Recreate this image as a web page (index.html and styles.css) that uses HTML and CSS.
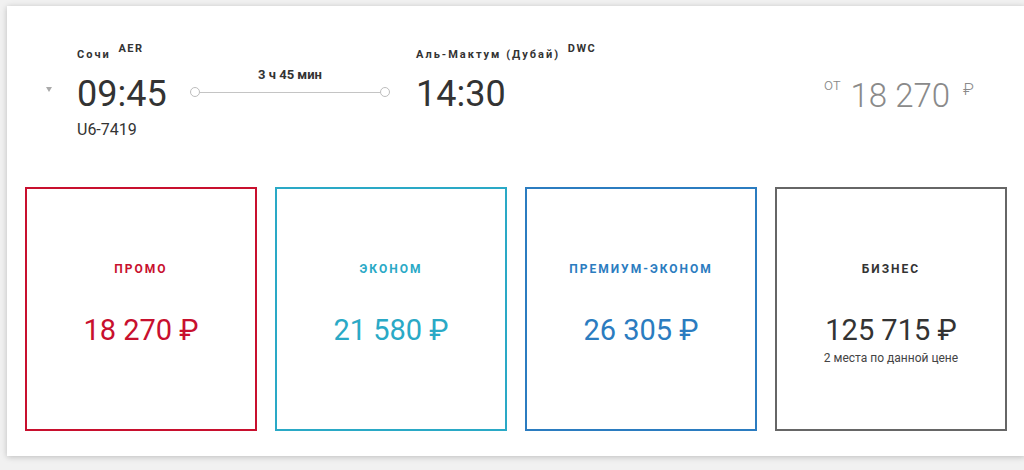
FILE: index.html
```html
<!DOCTYPE html>
<html lang="ru">
<head>
<meta charset="utf-8">
<title>Рейс</title>
<link rel="stylesheet" href="styles.css">
</head>
<body>
<div class="card">
  <div class="flight">
    <span class="caret"></span>
    <div class="point dep">
      <div class="city">Сочи <span class="code">AER</span></div>
      <div class="time">09:45</div>
      <div class="num">U6-7419</div>
    </div>
    <div class="duration">
      <div class="dur-text">3 ч 45 мин</div>
      <div class="track"><span class="dot"></span><span class="line"></span><span class="dot"></span></div>
    </div>
    <div class="point arr">
      <div class="city">Аль-Мактум (Дубай) <span class="code">DWC</span></div>
      <div class="time">14:30</div>
    </div>
    <div class="from">
      <span class="from-lbl">от</span><span class="from-val">18 270</span><span class="from-cur">₽</span>
    </div>
  </div>
  <div class="fares">
    <div class="fare promo">
      <div class="fare-name">Промо</div>
      <div class="fare-price">18 270 ₽</div>
    </div>
    <div class="fare econ">
      <div class="fare-name">Эконом</div>
      <div class="fare-price">21 580 ₽</div>
    </div>
    <div class="fare prem">
      <div class="fare-name">Премиум-эконом</div>
      <div class="fare-price">26 305 ₽</div>
    </div>
    <div class="fare biz">
      <div class="fare-name">Бизнес</div>
      <div class="fare-price">125 715 ₽</div>
      <div class="fare-note">2 места по данной цене</div>
    </div>
  </div>
</div>
</body>
</html>
```

FILE: styles.css
```css
html, body {
  margin: 0;
  padding: 0;
}
body {
  background: #f1f1f1;
  font-family: Roboto, "Liberation Sans", sans-serif;
  color: #333;
  width: 1024px;
  height: 470px;
  overflow: hidden;
}
.card {
  margin: 6px 0 0 7px;
  width: 1018px;
  box-sizing: border-box;
  background: #fff;
  box-shadow: 0 1px 6px rgba(0, 0, 0, 0.22);
  padding: 0 18px 25px 18px;
}
.flight {
  display: flex;
  align-items: flex-start;
  padding-top: 42px;
  height: 139px;
}
.caret {
  width: 0;
  height: 0;
  border-left: 3px solid transparent;
  border-right: 3px solid transparent;
  border-top: 5px solid #aaa;
  margin: 39px 25px 0 21px;
}
.dep {
  width: 113px;
  flex: none;
}
.arr {
  flex: 1;
  margin-left: 26px;
}
.city {
  font-size: 11px;
  line-height: 14px;
  font-weight: 700;
  letter-spacing: 2px;
  color: #333;
  white-space: nowrap;
}
.code {
  vertical-align: 6px;
  line-height: 0;
  letter-spacing: 1.5px;
  margin-left: 3px;
}
.time {
  font-size: 36px;
  line-height: 42px;
  margin-top: 11px;
  color: #333;
}
.num {
  font-size: 16px;
  line-height: 20px;
  margin-top: 5px;
  color: #333;
}
.duration {
  width: 200px;
  flex: none;
  margin-top: 19px;
}
.dur-text {
  font-size: 13px;
  line-height: 16px;
  font-weight: 700;
  text-align: center;
  color: #333;
}
.track {
  display: flex;
  align-items: center;
  margin-top: 4px;
  height: 10px;
}
.dot {
  width: 8px;
  height: 8px;
  border: 1px solid #bdbdbd;
  border-radius: 50%;
  background: #fff;
  flex: none;
}
.line {
  flex: 1;
  height: 1px;
  background: #c4c4c4;
}
.from {
  display: flex;
  align-items: flex-start;
  margin-top: 28px;
  margin-right: 33px;
  font-weight: 300;
  color: #8a8a8a;
  white-space: nowrap;
}
.from-lbl {
  font-size: 16px;
  line-height: 18px;
  margin-top: 0;
  margin-right: 10px;
}
.from-val {
  font-size: 33px;
  line-height: 40px;
}
.from-cur {
  font-size: 17px;
  line-height: 20px;
  margin-top: 3px;
  margin-left: 13px;
}
.fares {
  display: grid;
  grid-template-columns: repeat(4, 232px);
  column-gap: 18px;
}
.fare {
  height: 244px;
  box-sizing: border-box;
  border: 2px solid #666;
  padding-top: 72px;
  text-align: center;
}
.fare-name {
  font-size: 12px;
  line-height: 16px;
  font-weight: 700;
  letter-spacing: 2px;
  text-transform: uppercase;
}
.fare-price {
  font-size: 29px;
  line-height: 34px;
  margin-top: 36px;
}
.fare-note {
  font-size: 12px;
  line-height: 16px;
  margin-top: 3px;
  color: #444;
}
.promo { border-color: #c8102e; color: #c8102e; }
.econ { border-color: #2aa9c6; color: #2aa9c6; }
.prem { border-color: #2b7cc0; color: #2b7cc0; }
.biz { border-color: #666; color: #333; }
```
